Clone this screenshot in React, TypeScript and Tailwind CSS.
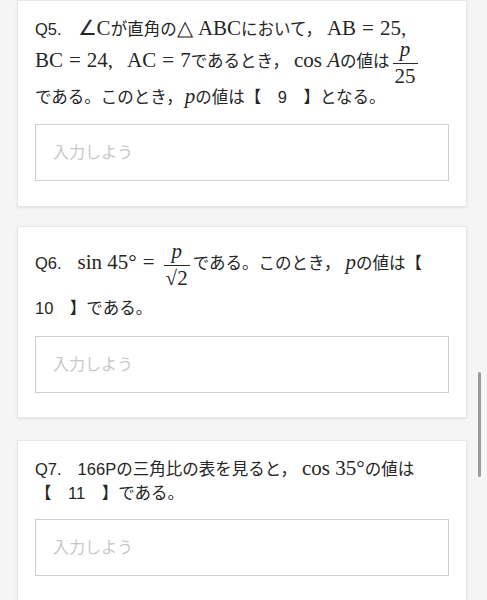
import React from 'react';

const sans = "font-['Liberation_Sans','Noto_Sans_CJK_JP',sans-serif]";

function M({ children, className = '' }: { children: React.ReactNode; className?: string }) {
  return <span className={`font-['Liberation_Serif',serif] text-[21px] ${className}`}>{children}</span>;
}

function V({ children, className = '' }: { children: React.ReactNode; className?: string }) {
  return <span className={`font-['Liberation_Serif',serif] text-[21px] italic ${className}`}>{children}</span>;
}

function Eq() {
  return <span className="font-['Liberation_Serif',serif] text-[21px] mx-[6px]">=</span>;
}

function Frac({ top, bottom }: { top: React.ReactNode; bottom: React.ReactNode }) {
  return (
    <span className="inline-flex flex-col items-center align-middle leading-none font-['Liberation_Serif',serif] text-[21px] mx-[3px]">
      <span className="px-[2px] pb-[3px]">{top}</span>
      <span className="w-full border-t border-[#2a2a2a]" />
      <span className="px-[2px] pt-[2px]">{bottom}</span>
    </span>
  );
}

function Card({ children, className = '' }: { children: React.ReactNode; className?: string }) {
  return (
    <div
      className={`ml-[17px] mr-[20px] bg-white border border-[#e6e6e6] shadow-[0_1px_3px_rgba(0,0,0,0.07)] px-[17px] pt-[16px] ${className}`}
    >
      {children}
    </div>
  );
}

function Answer() {
  return (
    <div className="h-[57px] border border-[#cfcfcf] bg-white flex items-center pl-[17px]">
      <span className="text-[16px] text-[#c8c8c8]">入力しよう</span>
    </div>
  );
}

export default function App() {
  return (
    <div className={`relative h-[600px] w-full overflow-hidden bg-[#f5f5f5] text-[#262626] text-[16.5px] ${sans}`}>
      {/* Q5 */}
      <Card className="pb-[25px]">
        <div className="h-6 flex items-center whitespace-pre">
          <span>
            Q5.<span className="inline-block w-[16px]" />
            <M>∠C</M>が直角の<M>△ ABC</M>において，<M className="ml-[5px]">AB</M>
            <Eq />
            <M>25,</M>
          </span>
        </div>
        <div className="h-[44px] flex items-center whitespace-pre">
          <span>
            <M>BC</M>
            <Eq />
            <M>24,</M>
            <span className="inline-block w-[14px]" />
            <M>AC</M>
            <Eq />
            <M>7</M>であるとき，<M className="ml-[5px]">cos </M>
            <V>A</V>の値は<Frac top={<i>p</i>} bottom="25" />
          </span>
        </div>
        <div className="h-6 flex items-center whitespace-pre">
          <span>
            である。このとき，<V className="ml-[2px]">p</V>の値は【　9　】となる。
          </span>
        </div>
        <div className="mt-[15px]">
          <Answer />
        </div>
      </Card>

      {/* Q6 */}
      <Card className="mt-[19px] pb-[24px]">
        <div className="h-[44px] flex items-center whitespace-pre">
          <span>
            Q6.<span className="inline-block w-[16px]" />
            <M>sin 45°</M>
            <Eq />
            <Frac
              top={<i>p</i>}
              bottom={
                <span>
                  √<span className="border-t border-[#2a2a2a]">2</span>
                </span>
              }
            />
            である。このとき，<V className="ml-[5px]">p</V>の値は【
          </span>
        </div>
        <div className="mt-[9px] h-6 flex items-center whitespace-pre">
          <span>10　】である。</span>
        </div>
        <div className="mt-[16px]">
          <Answer />
        </div>
      </Card>

      {/* Q7 */}
      <Card className="mt-[22px] pb-[25px]">
        <div className="h-6 flex items-center whitespace-pre">
          <span>
            Q7.<span className="inline-block w-[16px]" />
            166Pの三角比の表を見ると，<M className="ml-[5px]">cos 35°</M>の値は
          </span>
        </div>
        <div className="h-6 flex items-center whitespace-pre">
          <span>【　11　】である。</span>
        </div>
        <div className="mt-[14px]">
          <Answer />
        </div>
      </Card>

      {/* scrollbar thumb */}
      <div className="absolute right-[6px] top-[372px] h-[105px] w-[3px] rounded-full bg-[#9c9c9c]" />
    </div>
  );
}
